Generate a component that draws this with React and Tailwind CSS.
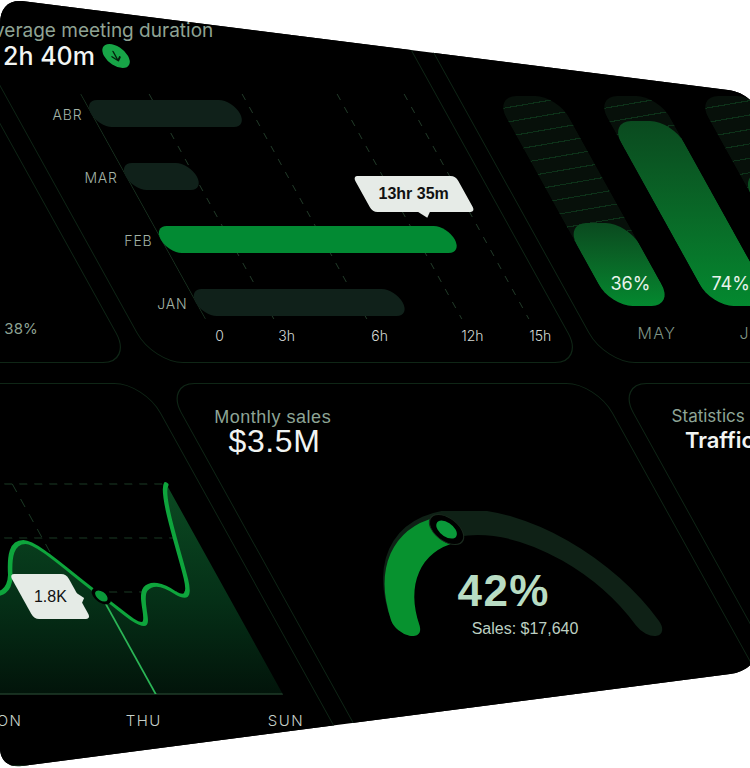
import React from 'react';

const hours = [
  { month: 'ABR', width: 149, active: false },
  { month: 'MAR', width: 71, active: false },
  { month: 'FEB', width: 294, active: true },
  { month: 'JAN', width: 207, active: false },
];

const hourTicks = [
  { label: '0', left: 5 },
  { label: '3h', left: 72 },
  { label: '6h', left: 165 },
  { label: '12h', left: 258 },
  { label: '15h', left: 326 },
];

const monthly = [
  { month: 'MAY', value: '36%', fill: 83 },
  { month: 'JUN', value: '74%', fill: 185 },
  { month: 'JUL', value: '52%', fill: 133 },
];

// text sits upright inside the skewed board
function Up({ className = '', children }) {
  return <span className={`inline-block -skew-x-[29deg] ${className}`}>{children}</span>;
}

function Card({ className = '', children }) {
  return (
    <div
      className={`relative overflow-hidden rounded-[30px] border border-[#0f2616] bg-black ${className}`}
    >
      {children}
    </div>
  );
}

function MeetingCard() {
  return (
    <Card>
      <div className="flex flex-col items-start pl-[19px] pt-[38px]">
        <Up className="-ml-[7px] text-[19px] leading-[24px] text-[#8fa394]">Average meeting duration</Up>
        <div className="-mt-[2px] flex h-[30px] items-center gap-[9px]">
          <Up className="text-[25px] font-medium leading-[30px] text-[#f2f5f3]">2h 40m</Up>
          <span className="flex h-[24px] w-[24px] items-center justify-center rounded-full bg-[#17a547]">
            <svg viewBox="0 0 24 24" className="h-[17px] w-[17px]" fill="none" stroke="#03200b" strokeWidth="2.1" strokeLinecap="round" strokeLinejoin="round">
              <path d="M12 5v13M6.5 12.5 12 18l5.5-5.5" />
            </svg>
          </span>
        </div>
      </div>

      <div className="relative mt-[23px] h-[225px]">
        <svg className="absolute left-[75px] top-0 h-[225px] w-[357px]" viewBox="0 0 357 225">
          <line x1="0.5" y1="0" x2="0.5" y2="225" stroke="#1a3522" strokeWidth="1" />
          {[69, 162, 257, 324].map((x) => (
            <line key={x} x1={x} y1="0" x2={x} y2="225" stroke="#223b29" strokeWidth="1" strokeDasharray="6 7" />
          ))}
        </svg>

        <div className="relative flex flex-col gap-[36px] pt-[6px]">
          {hours.map((h) => (
            <div key={h.month} className="flex h-[27px] items-center">
              <div className="w-[66px] text-right">
                <Up className="text-[14px] font-light tracking-[0.06em] text-[#a3b3a7]">{h.month}</Up>
              </div>
              <div
                className={`ml-[9px] h-[27px] rounded-full ${h.active ? 'bg-[#028a33]' : 'bg-[#10211a]'}`}
                style={{ width: h.width }}
              />
            </div>
          ))}
        </div>

        <div className="absolute left-[302px] top-[82px] flex h-[36px] w-[103px] items-center justify-center rounded-[5px] bg-[#e6ebe7]">
          <Up className="text-[16px] font-semibold text-[#111] [font-family:'Liberation_Sans',Arial,sans-serif]">13hr 35m</Up>
          <span className="absolute -bottom-[4px] left-[47px] h-[9px] w-[9px] rotate-45 bg-[#e6ebe7]" />
        </div>

        {hourTicks.map((t) => (
          <div
            key={t.label}
            className="absolute top-[229px] w-[40px] -translate-x-1/2 text-center"
            style={{ left: t.left + 75 }}
          >
            <Up className="text-[14px] font-light leading-[18px] text-[#d3dad5]">{t.label}</Up>
          </div>
        ))}
      </div>
    </Card>
  );
}

function MonthlyBarsCard() {
  return (
    <Card>
      <div className="flex gap-[38px] pl-[36px] pt-[115px]">
        {monthly.map((m) => (
          <div key={m.month} className="flex w-[63px] flex-col items-center">
            <div className="flex h-[210px] w-[63px] flex-col justify-end overflow-hidden rounded-[22px] bg-[#07100a] bg-[repeating-linear-gradient(171deg,transparent_0px,transparent_12px,#0d3219_12px,#0d3219_13px)]">
              <div
                className="flex flex-col items-center justify-end rounded-t-[22px] bg-linear-to-b from-[#0a4a1f] to-[#03892f] pb-[12px]"
                style={{ height: m.fill }}
              >
                <Up className="text-[18px] leading-[20px] text-[#eaf3ec]">{m.value}</Up>
              </div>
            </div>
            <Up className="mt-[17px] text-[16px] font-light leading-[20px] tracking-[0.08em] text-[#7f9486]">
              {m.month}
            </Up>
          </div>
        ))}
      </div>
    </Card>
  );
}

function SmallStatCard() {
  return (
    <Card>
      <div className="flex h-full flex-col items-end justify-end pb-[24px] pr-[76px]">
        <Up className="text-[15px] leading-[18px] text-[#8ea394]">38%</Up>
      </div>
    </Card>
  );
}

const curve =
  'M40 196 C80 190 110 225 150 214 C165 210 178 212 190 192 C200 172 210 158 223 158 C236 158 252 190 270 212 C282 226 288 240 296 240 C304 240 306 214 318 205 C328 198 338 200 346 209 C352 214 358 214 364 195 C372 170 385 110 397 100';

function VisitorsCard() {
  return (
    <Card className="pt-[88px]">
      <svg className="block h-[230px] w-[432px]" viewBox="0 88 432 230">
        <defs>
          <linearGradient id="area" x1="0" y1="100" x2="0" y2="310" gradientUnits="userSpaceOnUse">
            <stop offset="0" stopColor="#0b4a22" />
            <stop offset="0.55" stopColor="#053017" />
            <stop offset="1" stopColor="#02140a" />
          </linearGradient>
        </defs>
        {[100, 154, 208, 261].map((y) => (
          <line key={y} x1="40" y1={y} x2="397" y2={y} stroke="#1b3a25" strokeWidth="1" strokeDasharray="8 7" />
        ))}
        {[101, 243].map((x) => (
          <line key={x} x1={x} y1="100" x2={x} y2="310" stroke="#1b3a25" strokeWidth="1" strokeDasharray="8 7" />
        ))}
        <path d={`${curve} L397 310 L40 310 Z`} fill="url(#area)" />
        <line x1="40" y1="310" x2="397" y2="310" stroke="#1f3b29" strokeWidth="1.5" />
        <path d={curve} fill="none" stroke="#0ea53c" strokeWidth="4" strokeLinecap="round" />
        <line x1="270" y1="212" x2="270" y2="310" stroke="#2bb556" strokeWidth="2" />
        <circle cx="270" cy="212" r="7" fill="#0a9a3a" stroke="#000" strokeWidth="3" />
      </svg>

      <div className="ml-[30px] mt-[6px] grid grid-cols-[142px_142px_142px]">
        {['MON', 'THU', 'SUN'].map((d) => (
          <div key={d} className="text-center">
            <Up className="text-[15px] font-light leading-[20px] tracking-[0.1em] text-[#c8d2cb]">{d}</Up>
          </div>
        ))}
      </div>

      <div className="absolute left-[190px] top-[190px] flex h-[45px] w-[57px] items-center justify-center rounded-[5px] bg-[#e5ebe6]">
        <Up className="text-[16px] font-medium text-[#111] [font-family:'Liberation_Sans',Arial,sans-serif]">1.8K</Up>
        <span className="absolute -right-[3px] top-[20px] h-[8px] w-[8px] rotate-45 bg-[#e5ebe6]" />
      </div>
    </Card>
  );
}

function SalesCard() {
  return (
    <Card className="px-[30px] pt-[22px]">
      <div className="flex flex-col items-start [font-family:'Liberation_Sans',Arial,sans-serif]">
        <Up className="text-[18px] leading-[22px] tracking-[0.03em] text-[#8ea596]">Monthly sales</Up>
        <Up className="-mt-[3px] ml-[1px] text-[32px] font-medium leading-[32px] tracking-[0.02em] text-[#f1f4f2]">
          $3.5M
        </Up>
      </div>

      <div className="relative ml-[60px] mt-[54px] h-[130px] w-[276px]">
        <svg className="block h-[130px] w-[276px]" viewBox="-3 0 276 130">
          <path d="M14 112 A123 123 0 0 1 256 112" fill="none" stroke="#0f2116" strokeWidth="26" strokeLinecap="round" />
          <path d="M14 112 A123 123 0 0 1 107 18.6" fill="none" stroke="#07922f" strokeWidth="26" strokeLinecap="round" />
          <circle cx="107" cy="18.6" r="15" fill="#000" stroke="#1a2a1e" strokeWidth="1" />
          <circle cx="107" cy="18.6" r="9" fill="#0a9a3a" />
        </svg>
        <div className="absolute left-0 top-[58px] flex w-[266px] flex-col items-center [font-family:'Liberation_Sans',Arial,sans-serif]">
          <Up className="text-[44px] font-semibold leading-[44px] tracking-[0.03em] text-[#b8dcc3]">42%</Up>
          <Up className="mt-[6px] text-[16px] leading-[20px] text-[#bdd0c2]">Sales: $17,640</Up>
        </div>
      </div>
    </Card>
  );
}

function TrafficCard() {
  return (
    <Card className="pl-[36px] pt-[21px]">
      <div className="flex flex-col items-start">
        <Up className="text-[17px] leading-[22px] text-[#8ea596]">Statistics</Up>
        <Up className="-mt-[1px] text-[22px] font-semibold leading-[28px] text-[#f2f5f3]">Traffic</Up>
      </div>
    </Card>
  );
}

export default function App() {
  return (
    <div className="h-[768px] w-[750px] overflow-hidden bg-white [font-family:Inter,'Noto_Sans',sans-serif]">
      <div className="h-[768px] w-[750px] overflow-hidden bg-black [clip-path:path('M0_24C0_8_8_0_22_1L728_90C744_92_758_102_758_120L758_646C758_662_746_672_730_674L22_766C8_768_0_760_0_748Z')]">
        <div className="-ml-[500px] -mt-[20px] grid w-[1336px] origin-[0_20px] skew-x-[29deg] grid-cols-[432px_432px_432px] grid-rows-[383px_383px] gap-[20px]">
          <SmallStatCard />
          <MeetingCard />
          <MonthlyBarsCard />
          <VisitorsCard />
          <SalesCard />
          <TrafficCard />
        </div>
      </div>
    </div>
  );
}
